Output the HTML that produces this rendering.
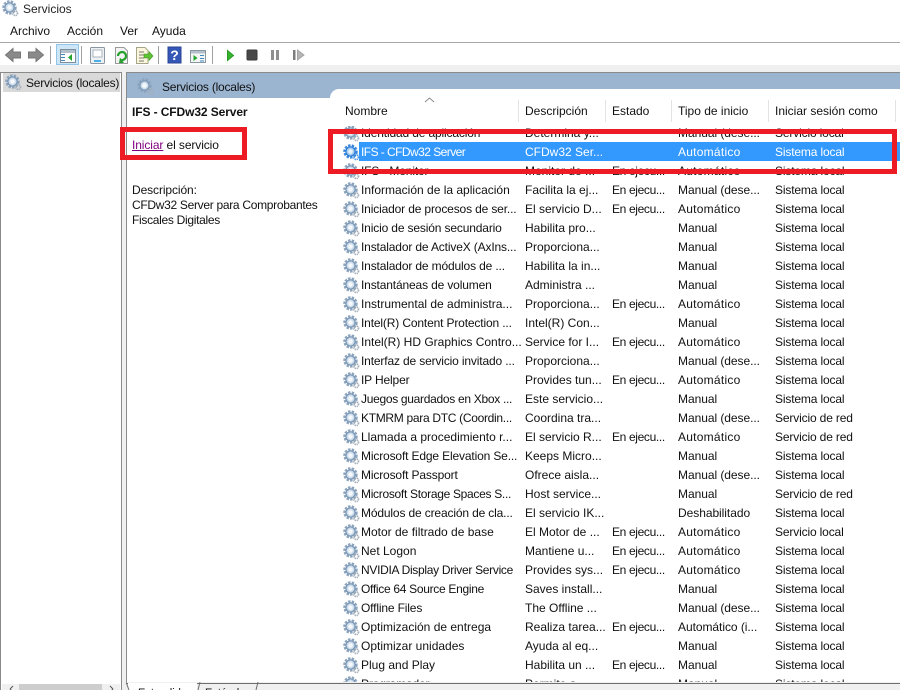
<!DOCTYPE html>
<html><head><meta charset="utf-8"><title>Servicios</title>
<style>
html,body{margin:0;padding:0;background:#fff;}
body{width:916px;height:697px;position:relative;overflow:hidden;font-family:"Liberation Sans",sans-serif;font-size:12px;color:#111;}
.a{position:absolute;white-space:nowrap;}
.r{position:absolute;left:0;width:570px;height:19px;line-height:19px;}
.r span{position:absolute;top:1px;white-space:nowrap;}
.r svg{position:absolute;left:12.5px;top:1.5px;width:17px;height:17px;}
.r .n{left:31px;letter-spacing:-.15px}.r .d{left:195px}.r .e{left:282px;letter-spacing:-.35px}.r .t{left:348px;letter-spacing:-.05px}.r .s{left:445px;letter-spacing:-.15px}
.z{letter-spacing:0!important}.y{letter-spacing:-.3px!important}.u{letter-spacing:.25px!important}
.h{position:absolute;top:101px;height:22px;line-height:21px;}
.sep{position:absolute;width:1px;background:#e3e3e3;top:100px;height:22px;}
.tsep{position:absolute;width:1px;background:#a0a0a0;top:46px;height:18px;}
.box{position:absolute;border:5px solid #ed1c24;box-sizing:border-box;}
</style></head><body>
<svg width="0" height="0" style="position:absolute"><defs>
<symbol id="g" viewBox="0 0 17 17">
<circle cx="7.5" cy="7.5" r="5.9" fill="none" stroke="#8ba3bc" stroke-width="2.6" stroke-dasharray="2.4 1.2"/>
<circle cx="7.5" cy="7.5" r="4.6" fill="#cfdeec" stroke="#7b98b6" stroke-width="1.3"/>
<circle cx="7.5" cy="7.5" r="2.3" fill="#f6f9fc"/>
<circle cx="13.2" cy="13.2" r="2.3" fill="none" stroke="#a3aeb9" stroke-width="1.7" stroke-dasharray="1.2 .7"/>
</symbol>
<symbol id="gs" viewBox="0 0 17 17">
<circle cx="7.5" cy="7.5" r="5.9" fill="none" stroke="#3a86dc" stroke-width="2.6" stroke-dasharray="2.4 1.2"/>
<circle cx="7.5" cy="7.5" r="4.6" fill="#a8cdf0" stroke="#2f7fd8" stroke-width="1.3"/>
<circle cx="7.5" cy="7.5" r="2.3" fill="#e8f3fc"/>
<circle cx="13.2" cy="13.2" r="2.3" fill="none" stroke="#4a93e4" stroke-width="1.7" stroke-dasharray="1.2 .7"/>
</symbol>
</defs></svg>

<!-- title -->
<svg class="a" style="left:2px;top:0;width:17px;height:17px"><use href="#g"/></svg>
<div class="a" style="left:23px;top:1px;line-height:17px;color:#222">Servicios</div>
<!-- menu -->
<div class="a" style="left:10px;top:23px;line-height:17px">Archivo</div>
<div class="a" style="left:67px;top:23px;line-height:17px">Acción</div>
<div class="a" style="left:120px;top:23px;line-height:17px">Ver</div>
<div class="a" style="left:152px;top:23px;line-height:17px">Ayuda</div>
<div class="a" style="left:0;top:42px;width:900px;height:1px;background:#a8a8a8"></div>
<!-- toolbar -->
<div class="a" style="left:0;top:65px;width:900px;height:8px;background:#efefef"></div>
<svg class="a" style="left:0;top:43px" width="320" height="22" viewBox="0 0 320 22">
<path d="M5.5 12 L13 5.5 V9 H20.5 V15 H13 V18.5 Z" fill="#8a8a8a" stroke="#777"/>
<path d="M43.5 12 L36 5.5 V9 H28.5 V15 H36 V18.5 Z" fill="#8a8a8a" stroke="#777"/>
<rect x="56.5" y="1.5" width="22" height="20" fill="#cde6f7" stroke="#92c5ea"/>
<rect x="60.5" y="6.5" width="15" height="13" fill="#fff" stroke="#7d8d9c"/>
<rect x="61" y="7" width="14" height="3" fill="#b4c1cd"/>
<path d="M61 11h4v1h-4zM61 14h4v1h-4zM61 17h4v1h-4z" fill="#3f8ac0"/>
<path d="M72 11 L68 14.5 L72 18 Z" fill="#22a52c"/>
<rect x="90.5" y="4.5" width="14" height="16" rx="1" fill="#eef1f4" stroke="#8a96a2"/>
<rect x="93" y="7" width="9" height="7" fill="#fff" stroke="#a8b3bd"/>
<rect x="94" y="17" width="7" height="2" fill="#49b0e8"/>
<path d="M115.5 4.5 H124 L127.5 8 V20.5 H115.5 Z" fill="#f4f4f4" stroke="#9a9a9a"/>
<path d="M118 13 a4 4 0 1 1 3.5 4" fill="none" stroke="#25a02c" stroke-width="2.2"/>
<path d="M120 14.5 L124 20 L119 20 Z" fill="#25a02c"/>
<path d="M136.5 4.5 H145 L148 7.5 V20.5 H136.5 Z" fill="#fbf6dc" stroke="#a5a58a"/>
<path d="M139 9h5M139 12h5M139 15h5M139 18h5" stroke="#777" stroke-width="1"/>
<path d="M144 11 H149 V8.5 L153 13 L149 17.5 V15 H144 Z" fill="#5fc134" stroke="#3e9a20" stroke-width=".6"/>
<rect x="168" y="4" width="13" height="16" fill="#3557b8" stroke="#2a4390"/>
<text x="174.5" y="17" font-family="Liberation Sans" font-size="14" font-weight="bold" text-anchor="middle" fill="#fff">?</text>
<rect x="190.5" y="7.5" width="15" height="12" fill="#f3f6f3" stroke="#8a96a0"/>
<rect x="191" y="8" width="14" height="2.5" fill="#b4c1cd"/>
<path d="M193.5 12 L197.5 15 L193.5 18 Z" fill="#22a52c"/>
<path d="M200 12h4v1h-4zM200 15h4v1h-4zM200 17.5h4v1h-4z" fill="#3f8ac0"/>
<path d="M227.5 7.5 L233.5 12.5 L227.5 17.5 Z" fill="#35b52d" stroke="#2a9a25"/>
<rect x="247" y="7" width="10" height="10" rx="1" fill="#484848" stroke="#3a3a3a"/>
<rect x="271" y="7" width="3" height="10" fill="#8f8f8f"/>
<rect x="276" y="7" width="3" height="10" fill="#8f8f8f"/>
<rect x="293" y="7" width="2.5" height="10" fill="#7d7d7d"/>
<path d="M297.5 7 L304 12 L297.5 17 Z" fill="#b5b5b5" stroke="#a5a5a5"/>
</svg>
<div class="tsep" style="left:50px"></div>
<div class="tsep" style="left:81px"></div>
<div class="tsep" style="left:158px"></div>
<div class="tsep" style="left:212px"></div>

<!-- left tree pane -->
<div class="a" style="left:0;top:72px;width:122px;height:618px;background:#fff;border-left:1px solid #8a8a8a;border-right:1px solid #8a8a8a;box-sizing:border-box"></div>
<div class="a" style="left:0;top:72px;width:122px;height:1px;background:#8a8a8a"></div>
<div class="a" style="left:3px;top:73px;width:117px;height:19px;background:#d9d9d9"></div>
<svg class="a" style="left:5px;top:74px;width:17px;height:17px"><use href="#g"/></svg>
<div class="a" style="left:26px;top:75px;line-height:17px;letter-spacing:-.22px">Servicios (locales)</div>
<div class="a" style="left:2px;top:684px;width:118px;height:6px;background:#f0f0f0"></div>
<div class="a" style="left:19px;top:684px;width:83px;height:6px;background:#cdcdcd"></div>
<svg class="a" style="left:2px;top:684px" width="118" height="6"><path d="M11 2 L8 5 M8 5 L11 8 M108 2 L111 5 M111 5 L108 8" stroke="#555" fill="none"/></svg>
<!-- splitter -->
<div class="a" style="left:122px;top:72px;width:4px;height:618px;background:#f0f0f0"></div>

<!-- main pane -->
<div class="a" style="left:126px;top:72px;width:774px;height:611px;background:#fff;border-left:1px solid #8a8a8a;border-top:1px solid #8a8a8a;box-sizing:border-box"></div>
<div class="a" style="left:127px;top:73px;width:773px;height:25px;background:#9bb5d1"></div>
<svg class="a" style="left:137px;top:78px;width:17px;height:17px"><use href="#g"/></svg>
<div class="a" style="left:162px;top:79px;line-height:17px;letter-spacing:-.22px">Servicios (locales)</div>
<div class="a" style="left:132px;top:104px;line-height:17px;font-weight:bold;letter-spacing:-.1px">IFS - CFDw32 Server</div>
<div class="a" style="left:132px;top:137px;line-height:17px;letter-spacing:-.1px"><span style="color:#800080;text-decoration:underline">Iniciar</span> el servicio</div>
<div class="a" style="left:132px;top:183px;line-height:15px;letter-spacing:-.3px"><span style="letter-spacing:-.1px">Descripción:</span><br>CFDw32 Server para Comprobantes<br>Fiscales Digitales</div>

<!-- list -->
<div class="a" style="left:330px;top:89px;width:570px;height:34px;background:#fff;border-top-left-radius:9px"></div>
<svg class="a" style="left:424px;top:97px" width="11" height="6"><path d="M1 5 L5.5 1 L10 5" fill="none" stroke="#8a8a8a"/></svg>
<div class="h" style="left:345px">Nombre</div>
<div class="sep" style="left:518px"></div>
<div class="h" style="left:525px">Descripción</div>
<div class="sep" style="left:605px"></div>
<div class="h" style="left:612px">Estado</div>
<div class="sep" style="left:671px"></div>
<div class="h" style="left:678px">Tipo de inicio</div>
<div class="sep" style="left:768px"></div>
<div class="h" style="left:775px">Iniciar sesión como</div>
<div class="sep" style="left:895px"></div>

<div class="a" style="left:330px;top:126px;width:570px;height:556px;overflow:hidden">
<div class="r" style="top:-3px"><svg><use href="#g"/></svg><span class="n">Identidad de aplicación</span><span class="d">Determina y...</span><span class="t">Manual (dese...</span><span class="s">Servicio local</span></div>
<div class="a" style="left:29px;top:16px;width:541px;height:19px;background:#3399ff"></div>
<div class="r" style="top:16px;color:#fff"><svg><use href="#gs"/></svg><span class="n" style="letter-spacing:-.55px">IFS - CFDw32 Server</span><span class="d">CFDw32 Ser...</span><span class="t u">Automático</span><span class="s">Sistema local</span></div>
<div class="r" style="top:35px"><svg><use href="#g"/></svg><span class="n">IFS - Monitor</span><span class="d">Monitor de ...</span><span class="e">En ejecu...</span><span class="t u">Automático</span><span class="s">Sistema local</span></div>
<div class="r" style="top:54px"><svg><use href="#g"/></svg><span class="n z">Información de la aplicación</span><span class="d">Facilita la ej...</span><span class="e">En ejecu...</span><span class="t">Manual (dese...</span><span class="s">Sistema local</span></div>
<div class="r" style="top:73px"><svg><use href="#g"/></svg><span class="n">Iniciador de procesos de ser...</span><span class="d">El servicio D...</span><span class="e">En ejecu...</span><span class="t u">Automático</span><span class="s">Sistema local</span></div>
<div class="r" style="top:92px"><svg><use href="#g"/></svg><span class="n">Inicio de sesión secundario</span><span class="d">Habilita pro...</span><span class="t">Manual</span><span class="s">Sistema local</span></div>
<div class="r" style="top:111px"><svg><use href="#g"/></svg><span class="n">Instalador de ActiveX (AxIns...</span><span class="d">Proporciona...</span><span class="t">Manual</span><span class="s">Sistema local</span></div>
<div class="r" style="top:130px"><svg><use href="#g"/></svg><span class="n">Instalador de módulos de ...</span><span class="d">Habilita la in...</span><span class="t">Manual</span><span class="s">Sistema local</span></div>
<div class="r" style="top:149px"><svg><use href="#g"/></svg><span class="n">Instantáneas de volumen</span><span class="d">Administra ...</span><span class="t">Manual</span><span class="s">Sistema local</span></div>
<div class="r" style="top:168px"><svg><use href="#g"/></svg><span class="n z">Instrumental de administra...</span><span class="d">Proporciona...</span><span class="e">En ejecu...</span><span class="t u">Automático</span><span class="s">Sistema local</span></div>
<div class="r" style="top:187px"><svg><use href="#g"/></svg><span class="n">Intel(R) Content Protection ...</span><span class="d">Intel(R) Con...</span><span class="t">Manual</span><span class="s">Sistema local</span></div>
<div class="r" style="top:206px"><svg><use href="#g"/></svg><span class="n z">Intel(R) HD Graphics Contro...</span><span class="d">Service for I...</span><span class="e">En ejecu...</span><span class="t u">Automático</span><span class="s">Sistema local</span></div>
<div class="r" style="top:225px"><svg><use href="#g"/></svg><span class="n">Interfaz de servicio invitado ...</span><span class="d">Proporciona...</span><span class="t">Manual (dese...</span><span class="s">Sistema local</span></div>
<div class="r" style="top:244px"><svg><use href="#g"/></svg><span class="n">IP Helper</span><span class="d">Provides tun...</span><span class="e">En ejecu...</span><span class="t u">Automático</span><span class="s">Sistema local</span></div>
<div class="r" style="top:263px"><svg><use href="#g"/></svg><span class="n y">Juegos guardados en Xbox ...</span><span class="d">Este servicio...</span><span class="t">Manual</span><span class="s">Sistema local</span></div>
<div class="r" style="top:282px"><svg><use href="#g"/></svg><span class="n y">KTMRM para DTC (Coordin...</span><span class="d">Coordina tra...</span><span class="t">Manual (dese...</span><span class="s">Servicio de red</span></div>
<div class="r" style="top:301px"><svg><use href="#g"/></svg><span class="n z">Llamada a procedimiento r...</span><span class="d">El servicio R...</span><span class="e">En ejecu...</span><span class="t u">Automático</span><span class="s">Servicio de red</span></div>
<div class="r" style="top:320px"><svg><use href="#g"/></svg><span class="n">Microsoft Edge Elevation Se...</span><span class="d">Keeps Micro...</span><span class="t">Manual</span><span class="s">Sistema local</span></div>
<div class="r" style="top:339px"><svg><use href="#g"/></svg><span class="n">Microsoft Passport</span><span class="d">Ofrece aisla...</span><span class="t">Manual (dese...</span><span class="s">Sistema local</span></div>
<div class="r" style="top:358px"><svg><use href="#g"/></svg><span class="n y">Microsoft Storage Spaces S...</span><span class="d">Host service...</span><span class="t">Manual</span><span class="s">Servicio de red</span></div>
<div class="r" style="top:377px"><svg><use href="#g"/></svg><span class="n">Módulos de creación de cla...</span><span class="d">El servicio IK...</span><span class="t">Deshabilitado</span><span class="s">Sistema local</span></div>
<div class="r" style="top:396px"><svg><use href="#g"/></svg><span class="n z">Motor de filtrado de base</span><span class="d">El Motor de ...</span><span class="e">En ejecu...</span><span class="t u">Automático</span><span class="s">Servicio local</span></div>
<div class="r" style="top:415px"><svg><use href="#g"/></svg><span class="n z">Net Logon</span><span class="d">Mantiene u...</span><span class="e">En ejecu...</span><span class="t u">Automático</span><span class="s">Sistema local</span></div>
<div class="r" style="top:434px"><svg><use href="#g"/></svg><span class="n y">NVIDIA Display Driver Service</span><span class="d">Provides sys...</span><span class="e">En ejecu...</span><span class="t u">Automático</span><span class="s">Sistema local</span></div>
<div class="r" style="top:453px"><svg><use href="#g"/></svg><span class="n y">Office 64 Source Engine</span><span class="d">Saves install...</span><span class="t">Manual</span><span class="s">Sistema local</span></div>
<div class="r" style="top:472px"><svg><use href="#g"/></svg><span class="n">Offline Files</span><span class="d">The Offline ...</span><span class="t">Manual (dese...</span><span class="s">Sistema local</span></div>
<div class="r" style="top:491px"><svg><use href="#g"/></svg><span class="n z">Optimización de entrega</span><span class="d">Realiza tarea...</span><span class="e">En ejecu...</span><span class="t">Automático (i...</span><span class="s">Sistema local</span></div>
<div class="r" style="top:510px"><svg><use href="#g"/></svg><span class="n z">Optimizar unidades</span><span class="d">Ayuda al eq...</span><span class="t">Manual</span><span class="s">Sistema local</span></div>
<div class="r" style="top:529px"><svg><use href="#g"/></svg><span class="n z">Plug and Play</span><span class="d">Habilita un ...</span><span class="e">En ejecu...</span><span class="t">Manual</span><span class="s">Sistema local</span></div>
<div class="r" style="top:548px"><svg><use href="#g"/></svg><span class="n">Programador</span><span class="d">Permite a...</span><span class="t">Manual</span><span class="s">Sistema local</span></div>
</div>

<!-- tabs -->
<div class="a" style="left:126px;top:682px;width:774px;height:8px;background:#f0f0f0;overflow:hidden">
<div class="a" style="left:0;top:1px;width:774px;height:1px;background:#6e6e6e"></div>
<div class="a" style="left:2px;top:1px;width:69px;height:8px;background:#fff"></div>
<svg class="a" style="left:0;top:0" width="140" height="8"><path d="M0 0 L3 8 M74 0 L72 8 M132 0 L130 8" stroke="#6e6e6e" fill="none"/></svg>
<div class="a" style="left:12px;top:4px;font-size:11px;line-height:14px">Extendido</div>
<div class="a" style="left:79px;top:4px;font-size:11px;line-height:14px">Estándar</div>
</div>

<!-- red annotations -->
<div class="box" style="left:120px;top:127px;width:127px;height:33px"></div>
<div class="box" style="left:328px;top:129px;width:569px;height:45px"></div>
</body></html>
